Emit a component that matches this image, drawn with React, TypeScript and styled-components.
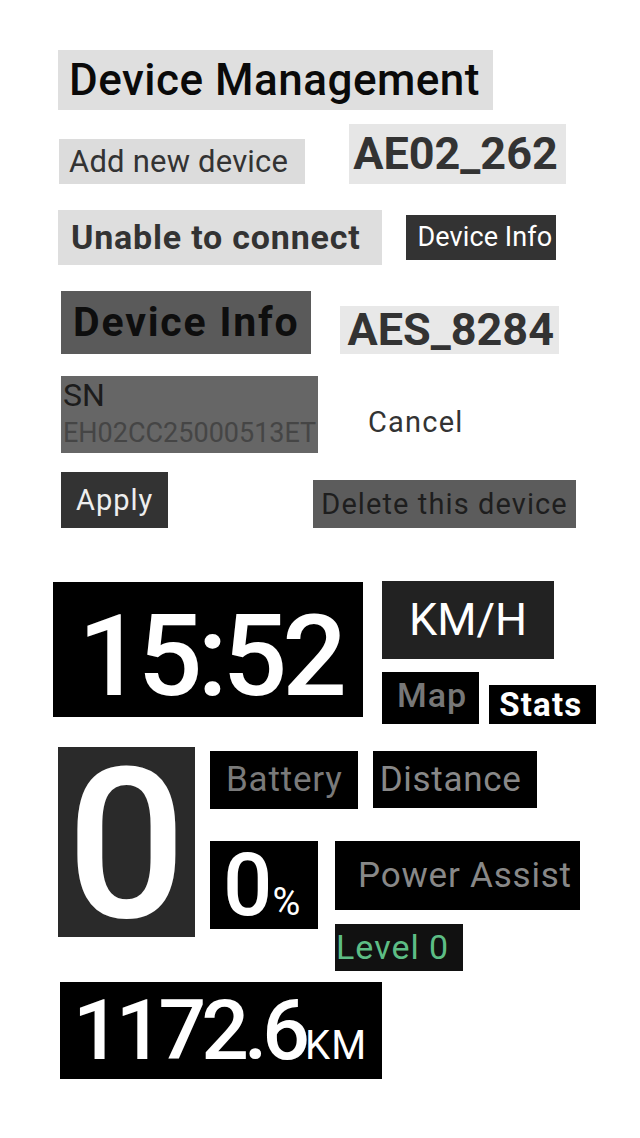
import React from "react";
import styled, { createGlobalStyle } from "styled-components";

const GlobalStyle = createGlobalStyle`
  html, body { margin: 0; padding: 0; background: #ffffff; }
  body { font-family: Roboto, "Noto Sans", "Liberation Sans", sans-serif; }
`;

const Page = styled.main`
  width: 640px;
  min-height: 1138px;
  box-sizing: border-box;
  padding-top: 50px;
  display: flex;
  flex-direction: column;
`;

const Row = styled.div<{ $mt?: number; $indent?: number; $gap?: number; $align?: string }>`
  display: flex;
  align-items: ${(p) => p.$align ?? "flex-start"};
  margin-top: ${(p) => p.$mt ?? 0}px;
  padding-left: ${(p) => p.$indent ?? 0}px;
  gap: ${(p) => p.$gap ?? 0}px;
`;

const Column = styled.div<{ $gap?: number; $mt?: number }>`
  display: flex;
  flex-direction: column;
  align-items: flex-start;
  gap: ${(p) => p.$gap ?? 0}px;
  margin-top: ${(p) => p.$mt ?? 0}px;
`;

type LabelProps = {
  $bg?: string;
  $fg: string;
  $size: number;
  $weight?: number;
  $h: number;
  $pl: number;
  $pr: number;
  $pb?: number;
  $ls?: number;
};

const Label = styled.div<LabelProps>`
  box-sizing: border-box;
  height: ${(p) => p.$h}px;
  line-height: ${(p) => p.$h - (p.$pb ?? 0)}px;
  padding: 0 ${(p) => p.$pr}px ${(p) => p.$pb ?? 0}px ${(p) => p.$pl}px;
  background: ${(p) => p.$bg ?? "transparent"};
  color: ${(p) => p.$fg};
  font-size: ${(p) => p.$size}px;
  font-weight: ${(p) => p.$weight ?? 400};
  letter-spacing: ${(p) => p.$ls ?? 0}px;
  white-space: nowrap;
`;

const SerialCard = styled.div`
  box-sizing: border-box;
  width: 257px;
  height: 77px;
  padding-left: 2px;
  background: #666666;
  overflow: hidden;
  white-space: nowrap;
`;

const SerialKey = styled.div`
  font-size: 32px;
  line-height: 38px;
  color: #1c1c1c;
`;

const SerialValue = styled.div`
  font-size: 27px;
  line-height: 39px;
  color: #454545;
`;

const Clock = styled.div`
  box-sizing: border-box;
  width: 310px;
  height: 135px;
  padding-top: 14px;
  margin-top: 1px;
  line-height: 121px;
  background: #000000;
  color: #ffffff;
  font-size: 114px;
  font-weight: 500;
  letter-spacing: -5px;
  text-indent: 4px;
  text-align: center;
  white-space: nowrap;
`;

const SpeedDigit = styled.div`
  box-sizing: border-box;
  width: 137px;
  height: 190px;
  padding-top: 6px;
  line-height: 184px;
  background: #2a2a2a;
  color: #ffffff;
  font-size: 210px;
  font-weight: 500;
  text-align: center;
`;

const Readout = styled.div<{ $w: number; $h: number; $pl: number }>`
  box-sizing: border-box;
  width: ${(p) => p.$w}px;
  height: ${(p) => p.$h}px;
  padding-left: ${(p) => p.$pl}px;
  background: #000000;
  color: #ffffff;
  white-space: nowrap;
  display: flex;
  align-items: baseline;
`;

const Value = styled.span<{ $size: number; $lh: number; $spacing?: number }>`
  font-size: ${(p) => p.$size}px;
  line-height: ${(p) => p.$lh}px;
  font-weight: 500;
  letter-spacing: ${(p) => p.$spacing ?? 0}px;
`;

const Unit = styled.span<{ $size: number; $spacing?: number }>`
  font-size: ${(p) => p.$size}px;
  letter-spacing: ${(p) => p.$spacing ?? 0}px;
`;

export default function App() {
  return (
    <>
      <GlobalStyle />
      <Page>
        <Row $indent={58}>
          <Label $bg="#dfdfdf" $fg="#0a0a0a" $size={44} $weight={500} $h={60} $pl={11} $pr={13} $ls={0.5}>
            Device Management
          </Label>
        </Row>

        <Row $mt={14} $indent={59} $gap={44} $align="flex-end">
          <Label $bg="#dcdcdc" $fg="#333333" $size={31} $h={45} $pl={10} $pr={17} $ls={0.2}>
            Add new device
          </Label>
          <Label $bg="#e6e6e6" $fg="#333333" $size={45} $weight={700} $h={60} $pl={4} $pr={8}>
            AE02_262
          </Label>
        </Row>

        <Row $mt={26} $indent={58} $gap={24} $align="center">
          <Label $bg="#dedede" $fg="#333333" $size={34} $weight={700} $h={55} $pl={13} $pr={21} $ls={0.8}>
            Unable to connect
          </Label>
          <Label $bg="#333333" $fg="#ffffff" $size={27} $h={45} $pl={12} $pr={4} $ls={0.1}>
            Device Info
          </Label>
        </Row>

        <Row $mt={26} $indent={61} $gap={29} $align="flex-end">
          <Label $bg="#5a5a5a" $fg="#0e0e0e" $size={41} $weight={700} $h={63} $pl={12} $pr={12} $ls={1.8}>
            Device Info
          </Label>
          <Label $bg="#e8e8e8" $fg="#333333" $size={45} $weight={700} $h={48} $pl={7} $pr={5}>
            AES_8284
          </Label>
        </Row>

        <Row $mt={22} $indent={61} $gap={50} $align="flex-end">
          <SerialCard>
            <SerialKey>SN</SerialKey>
            <SerialValue>EH02CC25000513ET</SerialValue>
          </SerialCard>
          <Label $fg="#333333" $size={29} $h={61} $pl={0} $pr={0} $ls={1.2}>
            Cancel
          </Label>
        </Row>

        <Row $mt={19} $indent={61} $gap={145} $align="flex-end">
          <Label $bg="#333333" $fg="#eeeeee" $size={29} $h={56} $pl={15} $pr={15} $ls={1}>
            Apply
          </Label>
          <Label $bg="#5c5c5c" $fg="#1e1e1e" $size={29} $h={48} $pl={8} $pr={8} $ls={1.1}>
            Delete this device
          </Label>
        </Row>

        <Row $mt={53} $indent={53} $gap={19}>
          <Clock>15:52</Clock>
          <Column $gap={13}>
            <Label $bg="#222222" $fg="#ffffff" $size={45} $h={78} $pl={27} $pr={27}>
              KM/H
            </Label>
            <Row $gap={10} $align="flex-end">
              <Label $bg="#000000" $fg="#777777" $size={34} $weight={500} $h={52} $pl={15} $pr={12} $pb={5} $ls={1}>
                Map
              </Label>
              <Label $bg="#000000" $fg="#ffffff" $size={33} $weight={700} $h={39} $pl={10} $pr={14} $ls={1.2}>
                Stats
              </Label>
            </Row>
          </Column>
        </Row>

        <Row $mt={23} $indent={58} $gap={15}>
          <SpeedDigit>0</SpeedDigit>
          <Column $mt={4} $gap={32}>
            <Row $gap={15}>
              <Label $bg="#000000" $fg="#7a7a7a" $size={35} $h={58} $pl={16} $pr={15} $ls={0.8}>
                Battery
              </Label>
              <Label $bg="#000000" $fg="#888888" $size={35} $h={57} $pl={7} $pr={16} $ls={0.7}>
                Distance
              </Label>
            </Row>
            <Row $gap={17}>
              <Readout $w={108} $h={88} $pl={13}>
                <Value $size={87} $lh={88}>0</Value>
                <Unit $size={38}>%</Unit>
              </Readout>
              <Column $gap={14}>
                <Label $bg="#000000" $fg="#888888" $size={35} $h={69} $pl={23} $pr={8} $ls={0.8}>
                  Power Assist
                </Label>
                <Label $bg="#111111" $fg="#5dbd85" $size={34} $h={47} $pl={1} $pr={14} $ls={1}>
                  Level 0
                </Label>
              </Column>
            </Row>
          </Column>
        </Row>

        <Row $mt={11} $indent={60}>
          <Readout $w={322} $h={97} $pl={13}>
            <Value $size={84} $lh={97} $spacing={-5}>1172.6</Value>
            <Unit $size={40} $spacing={1}>KM</Unit>
          </Readout>
        </Row>
      </Page>
    </>
  );
}
